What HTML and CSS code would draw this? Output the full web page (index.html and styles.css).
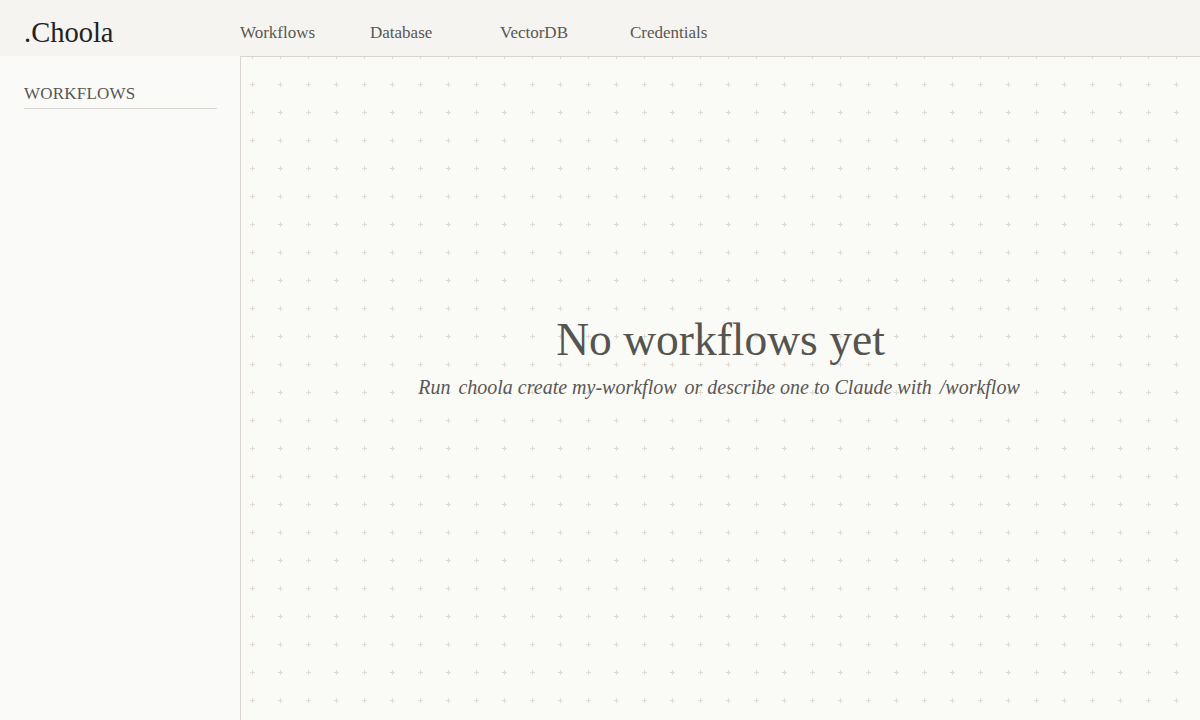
FILE: index.html
```html
<!DOCTYPE html>
<html lang="en">
<head>
	<meta charset="UTF-8">
	<title>Choola</title>
	<link rel="stylesheet" href="styles.css">
</head>
<body>
	<header class="topbar">
		<div class="brand">.Choola</div>
		<nav class="nav">
			<a href="javascript:;">Workflows</a>
			<a href="javascript:;">Database</a>
			<a href="javascript:;">VectorDB</a>
			<a href="javascript:;">Credentials</a>
		</nav>
	</header>
	<div class="layout">
		<aside class="sidebar">
			<h2 class="side-title">WORKFLOWS</h2>
		</aside>
		<main class="canvas">
			<!-- dotted grid behind the canvas -->
			<svg class="grid" width="100%" height="100%">
				<defs>
					<pattern id="plus" x="-3" y="13" width="28" height="28" patternUnits="userSpaceOnUse">
						<rect x="12" y="14" width="5" height="1" fill="#dedbd5"/>
						<rect x="14" y="12" width="1" height="5" fill="#dedbd5"/>
					</pattern>
				</defs>
				<rect width="100%" height="100%" fill="url(#plus)"/>
			</svg>
			<div class="empty">
				<h1 class="empty-title">No workflows yet</h1>
				<p class="empty-text">Run <span class="cmd">choola create my-workflow</span> or describe one to Claude with <span class="cmd">/workflow</span></p>
			</div>
		</main>
	</div>
</body>
</html>
```

FILE: styles.css
```css
*{margin:0;padding:0;box-sizing:border-box;}
html,body{height:100%;}
body{background:#fafaf7;color:#56534f;font-family:"Liberation Serif","Times New Roman",serif;overflow:hidden;}
a{text-decoration:none;color:inherit;}

.topbar{height:56px;padding-top:10px;background:#f5f4f0;display:flex;align-items:center;}
.brand{width:240px;padding-left:24px;font-size:28.5px;color:#222;}
.nav{display:flex;}
.nav a{width:130px;font-size:17px;color:#5a5753;}

.layout{display:flex;height:664px;}
.sidebar{width:240px;padding:28px 23px 0 24px;background:#fafaf8;}
.side-title{font-weight:normal;font-size:17px;line-height:20px;letter-spacing:0.2px;color:#5a5753;padding-bottom:4px;border-bottom:1px solid #d9d6d0;}

.canvas{flex:1;position:relative;border-left:1px solid #d9d5ce;border-top:1px solid #d9d5ce;background:#fafaf7;}
.grid{position:absolute;top:0;left:0;}
.empty{position:relative;padding-top:255px;text-align:center;}
.empty-title{font-weight:normal;font-size:45.5px;line-height:55px;color:#56544f;}
.empty-text{margin-top:6px;font-style:italic;font-size:20px;line-height:28px;color:#5a5753;}
.cmd{padding:0 3px;}
```
